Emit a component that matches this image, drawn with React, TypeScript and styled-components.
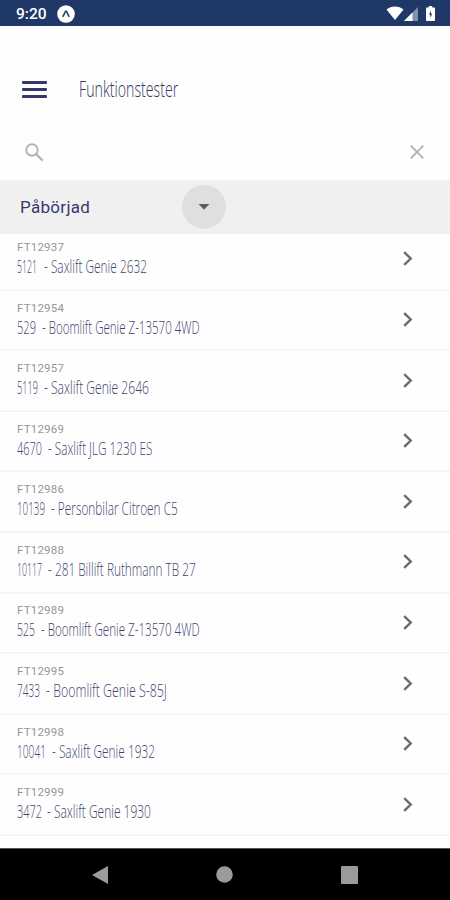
import { useLayoutEffect, useRef, useState } from 'react'
import styled, { createGlobalStyle } from 'styled-components'

const tests = [
  { id: 'FT12937', number: '5121', name: 'Saxlift Genie 2632', numberWidth: 20, nameStart: 27, nameWidth: 103 },
  { id: 'FT12954', number: '529', name: 'Boomlift Genie Z-13570 4WD', numberWidth: 19, nameStart: 25, nameWidth: 158 },
  { id: 'FT12957', number: '5119', name: 'Saxlift Genie 2646', numberWidth: 21, nameStart: 27, nameWidth: 105 },
  { id: 'FT12969', number: '4670', name: 'Saxlift JLG 1230 ES', numberWidth: 25, nameStart: 31, nameWidth: 104 },
  { id: 'FT12986', number: '10139', name: 'Personbilar Citroen C5', numberWidth: 28, nameStart: 34, nameWidth: 127 },
  { id: 'FT12988', number: '10117', name: '281 Billift Ruthmann TB 27', numberWidth: 25, nameStart: 31, nameWidth: 148 },
  { id: 'FT12989', number: '525', name: 'Boomlift Genie Z-13570 4WD', numberWidth: 18, nameStart: 24, nameWidth: 159 },
  { id: 'FT12995', number: '7433', name: 'Boomlift Genie S-85J', numberWidth: 23, nameStart: 29, nameWidth: 121 },
  { id: 'FT12998', number: '10041', name: 'Saxlift Genie 1932', numberWidth: 29, nameStart: 35, nameWidth: 103 },
  { id: 'FT12999', number: '3472', name: 'Saxlift Genie 1930', numberWidth: 25, nameStart: 30, nameWidth: 104 },
]

// Squeezes a line of text horizontally to the given width
function Condensed({ text, width }: { text: string; width: number }) {
  const ref = useRef<HTMLSpanElement>(null)
  const [scale, setScale] = useState(1)

  useLayoutEffect(() => {
    if (ref.current) setScale(width / ref.current.offsetWidth)
  }, [text, width])

  return (
    <CondensedText ref={ref} style={{ transform: `scaleX(${scale})` }}>
      {text}
    </CondensedText>
  )
}

export default function App() {
  return (
    <Screen>
      <GlobalStyle />
      <StatusBar>
        <Clock>9:20</Clock>
        <svg width="18" height="18" viewBox="0 0 18 18">
          <circle cx="9" cy="9" r="8.8" fill="#fff" />
          <path d="M5.8 11.8 8.6 6.2h.8l2.8 5.6" fill="none" stroke="#1f3868" strokeWidth="1.5" />
        </svg>
        <StatusIcons>
          <svg width="18" height="15" viewBox="0 0 18 15">
            <path d="M.5 3.4C5-.6 13-.6 17.5 3.4L9 14z" fill="#fff" />
          </svg>
          <svg width="14" height="14" viewBox="0 0 14 14">
            <path d="M0 14 14 0v14z" fill="#8291ad" />
            <path d="M0 14 8.5 5.5V14z" fill="#fff" />
          </svg>
          <Battery width="9" height="15" viewBox="0 0 9 15">
            <path d="M2.8 0h3.4v1.5H8c.6 0 1 .4 1 1V14c0 .6-.4 1-1 1H1c-.6 0-1-.4-1-1V2.5c0-.6.4-1 1-1h1.8z" fill="#fff" />
            <path d="M5 4.8 3 8.5h1.3v3l2-3.8H5z" fill="#1f3868" />
          </Battery>
        </StatusIcons>
      </StatusBar>

      <Header>
        <MenuIcon>
          <i />
          <i />
          <i />
        </MenuIcon>
        <Title>
          <Condensed text="Funktionstester" width={99} />
        </Title>
      </Header>

      <SearchBar>
        <svg width="19" height="19" viewBox="0 0 19 19" fill="none" stroke="#b4b4b4">
          <circle cx="7" cy="7" r="5.7" strokeWidth="1.9" />
          <path d="m11.3 11.3 6.3 6.3" strokeWidth="2.3" />
        </svg>
        <svg width="14" height="14" viewBox="0 0 14 14" fill="none" stroke="#b0b0b0">
          <path d="m.7.7 12.6 12.6M13.3.7.7 13.3" strokeWidth="1.7" />
        </svg>
      </SearchBar>

      <Filter>
        <FilterLabel>Påbörjad</FilterLabel>
        <DropdownButton>
          <svg width="12" height="6" viewBox="0 0 12 6">
            <path d="M.5 0h11L6 5.7z" fill="#5c5c5c" />
          </svg>
        </DropdownButton>
      </Filter>

      <List>
        <ListContent>
          {tests.map((test) => (
            <Row key={test.id}>
              <div>
                <TestId>{test.id}</TestId>
                <TestName $nameStart={test.nameStart}>
                  <Condensed text={test.number} width={test.numberWidth} />
                  <Condensed text={`- ${test.name}`} width={test.nameWidth} />
                </TestName>
              </div>
              <svg width="10" height="16" viewBox="0 0 10 16">
                <path d="m1.2 1.2 6.5 6.3-6.5 6.3" fill="none" stroke="#6a6a6a" strokeWidth="2.4" />
              </svg>
            </Row>
          ))}
        </ListContent>
      </List>

      <NavBar>
        <svg width="16" height="18" viewBox="0 0 16 18">
          <path d="M16 0v18L0 9z" fill="#9b9b9b" />
        </svg>
        <svg width="17" height="17" viewBox="0 0 17 17">
          <circle cx="8.5" cy="8.5" r="8.3" fill="#9b9b9b" />
        </svg>
        <svg width="17" height="18" viewBox="0 0 17 18">
          <rect width="17" height="18" rx="1" fill="#9b9b9b" />
        </svg>
      </NavBar>
    </Screen>
  )
}

const GlobalStyle = createGlobalStyle`
  * {
    box-sizing: border-box;
  }

  body {
    margin: 0;
    background: #fff;
    font-family: Roboto, 'Liberation Sans', sans-serif;
  }

  svg {
    display: block;
    flex: none;
  }
`

const Screen = styled.div`
  display: flex;
  flex-direction: column;
  width: 450px;
  height: 900px;
  overflow: hidden;
  background: #fefefe;
`

const StatusBar = styled.div`
  display: flex;
  align-items: center;
  height: 26px;
  padding: 1px 15px 0 16px;
  background: #1f3868;
`

const Clock = styled.div`
  width: 41px;
  padding-top: 1px;
  color: #fff;
  font-size: 15.5px;
  font-weight: 500;
  line-height: 26px;
`

const StatusIcons = styled.div`
  display: flex;
  align-items: center;
  margin-left: auto;
`

const Battery = styled.svg`
  margin-left: 8px;
`

const Header = styled.div`
  display: flex;
  align-items: center;
  height: 98px;
  padding: 28px 22px 0;
`

const MenuIcon = styled.div`
  display: flex;
  flex-direction: column;
  gap: 4px;
  width: 57px;

  i {
    width: 25px;
    height: 3px;
    border-radius: 1px;
    background: #36376a;
  }
`

const CondensedText = styled.span`
  display: inline-block;
  transform-origin: left center;
  white-space: nowrap;
`

const Title = styled.div`
  color: #33365f;
  font-family: 'Open Sans', 'Noto Sans', sans-serif;
  font-size: 21.5px;
  font-weight: 350;
  line-height: 28px;
`

const SearchBar = styled.div`
  display: flex;
  align-items: center;
  justify-content: space-between;
  height: 56px;
  padding: 0 26px 0 25px;
`

const Filter = styled.div`
  display: flex;
  align-items: center;
  height: 54px;
  padding-left: 20px;
  background: #f0f0f0;
`

const FilterLabel = styled.div`
  width: 162px;
  color: #36386c;
  font-size: 17px;
  letter-spacing: 0.3px;
`

const DropdownButton = styled.div`
  display: flex;
  align-items: center;
  justify-content: center;
  width: 44px;
  height: 44px;
  border-radius: 50%;
  background: #dfdfdf;
`

const List = styled.div`
  flex: 1;
  overflow: hidden;
`

/* The list is scrolled a few pixels under the filter */
const ListContent = styled.div`
  margin-top: -3.9px;
`

const Row = styled.div`
  display: flex;
  align-items: center;
  justify-content: space-between;
  height: 60.6px;
  padding: 0 37px 0 17px;
  border-bottom: 2px solid #f5f5f5;
`

const TestId = styled.div`
  color: #969696;
  font-size: 11.5px;
  line-height: 14px;
  letter-spacing: 0.2px;
`

const TestName = styled.div<{ $nameStart: number }>`
  display: grid;
  grid-template-columns: ${({ $nameStart }) => $nameStart}px max-content;
  justify-items: start;
  height: 25px;
  color: #42466e;
  font-family: 'Open Sans', 'Noto Sans', sans-serif;
  font-size: 17.5px;
  font-weight: 350;
  line-height: 25px;
`

const NavBar = styled.div`
  display: flex;
  align-items: center;
  justify-content: space-between;
  height: 52px;
  padding: 0 92px;
  border-top: 1px solid #555;
  background: #000;
`
